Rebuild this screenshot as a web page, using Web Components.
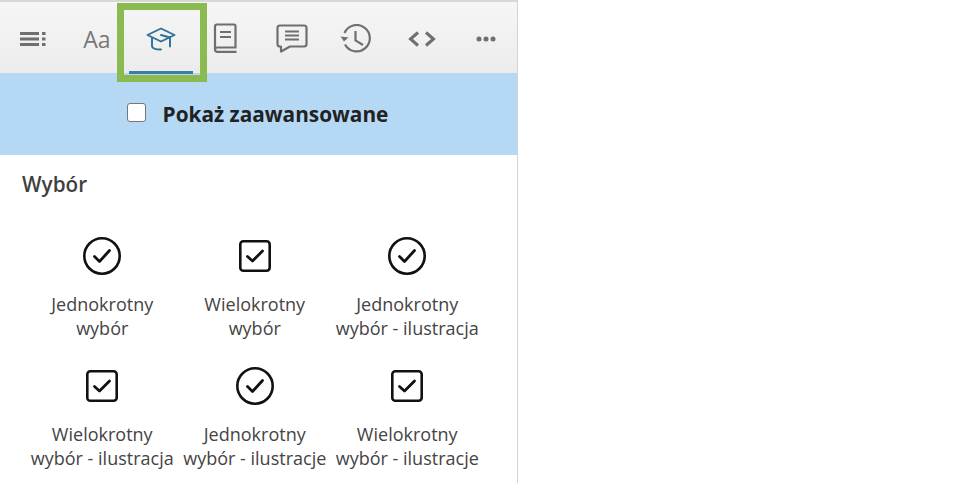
<!DOCTYPE html>
<html lang="pl">
<head>
<meta charset="utf-8">
<title>Panel</title>
<style>
  html, body { margin: 0; background: #fff; overflow: hidden; }
  body { font-family: "Open Sans", "Noto Sans", sans-serif; color: #3f3f3f; }
</style>
</head>
<body>
<side-panel>
  <tool-bar>
    <tool-tab><svg viewBox="0 0 26 14" width="26" height="14" fill="none" stroke="#6f6f6f" stroke-width="2.800"><path d="M0 1.500h19M0 7h19M0 12.500h19M22 1.500h3.500M22 7h3.500M22 12.500h3.500"/></svg></tool-tab>
    <tool-tab><span class="aa">Aa</span></tool-tab>
    <tool-tab active><svg viewBox="0 0 30 24" width="30" height="24" fill="none" stroke="#2c7196" stroke-width="1.900" stroke-linejoin="round" stroke-linecap="round"><path d="M15 1.500 28.500 8 15 14.500 1.500 8Z"/><path d="M6 11v8c0 2 3.500 3.500 9 3.500"/><path d="M15 8l9 2.500v9"/></svg></tool-tab>
    <tool-tab><svg viewBox="0 0 24 31" width="24" height="31" fill="none" stroke="#6f6f6f" stroke-width="2.200"><path d="M2 26V3.500C2 2.500 2.700 1.500 4 1.500H21.500C22.300 1.500 22.500 2 22.500 3V24.500H4.500C3 24.500 2 25.200 2 26.500 2 28 3 28.800 4.500 28.800H23.500"/><path d="M7 9h11M7 14h11"/></svg></tool-tab>
    <tool-tab><svg viewBox="0 0 32 30" width="32" height="30" fill="none" stroke="#6f6f6f" stroke-width="2.200" stroke-linejoin="round"><path d="M4 1.500H28Q30.500 1.500 30.500 4V20Q30.500 22.500 28 22.500H14L5 27.500V22.500H4Q1.500 22.500 1.500 20V4Q1.500 1.500 4 1.500Z"/><path d="M9 7.500h14M9 11.500h14M9 15.500h14"/></svg></tool-tab>
    <tool-tab><svg viewBox="0 0 32 30" width="32" height="30" fill="none" stroke="#6f6f6f" stroke-width="2.200"><path d="M4.500 9A13.200 13.200 0 1 1 5 20.500"/><path d="M0.500 12.500 4 17.500 8.500 13.500Z" fill="#6f6f6f" stroke="none"/><path d="M15.500 7V16.500L23 21"/></svg></tool-tab>
    <tool-tab><svg viewBox="0 0 28 16" width="28" height="16" fill="none" stroke="#6f6f6f" stroke-width="3"><path d="M10 1.500 2.500 8 10 14.500M18 1.500 25.500 8 18 14.500"/></svg></tool-tab>
    <tool-tab><svg viewBox="0 0 20 6" width="20" height="6" fill="#6f6f6f"><circle cx="3" cy="3" r="2.500"/><circle cx="10" cy="3" r="2.500"/><circle cx="17" cy="3" r="2.500"/></svg></tool-tab>
  </tool-bar>
  <advanced-bar>Pokaż zaawansowane</advanced-bar>
  <type-section heading="Wybór">
    <type-item kind="radio">Jednokrotny<br>wybór</type-item>
    <type-item kind="box">Wielokrotny<br>wybór</type-item>
    <type-item kind="radio">Jednokrotny<br>wybór - ilustracja</type-item>
    <type-item kind="box">Wielokrotny<br>wybór - ilustracja</type-item>
    <type-item kind="radio">Jednokrotny<br>wybór - ilustracje</type-item>
    <type-item kind="box">Wielokrotny<br>wybór - ilustracje</type-item>
  </type-section>
</side-panel>

<script>
class SidePanel extends HTMLElement {
  constructor() {
    super();
    this.attachShadow({ mode: 'open' }).innerHTML = `
      <style>
        :host { display: block; width: 517px; height: 483px; box-sizing: content-box;
                border-right: 1px solid #d4d4d4; overflow: hidden; }
      </style>
      <slot></slot>`;
  }
}

class ToolBar extends HTMLElement {
  constructor() {
    super();
    this.attachShadow({ mode: 'open' }).innerHTML = `
      <style>
        :host { display: grid; grid-template-columns: 65px 64px 63px 65px 70px 58px 73px 56px;
                height: 71px; border-top: 2px solid #d8d8d8;
                background: linear-gradient(#f6f6f6, #ececec); }
      </style>
      <slot></slot>`;
  }
}

class ToolTab extends HTMLElement {
  constructor() {
    super();
    this.attachShadow({ mode: 'open' }).innerHTML = `
      <style>
        :host { display: flex; align-items: center; justify-content: center;
                position: relative; padding-top: 2px; box-sizing: border-box; }
        ::slotted(.aa) { font: 23px "Open Sans", sans-serif; color: #777; }
        .mark { display: none; position: absolute; left: 0; width: 64px; top: 69px; height: 3px; background: #3a7fa3; }
        .frame { display: none; position: absolute; left: -12px; top: 1px; width: 76px; height: 65px;
                 border: 7px solid #8aba50; }
        :host([active]) .mark, :host([active]) .frame { display: block; }
      </style>
      <slot></slot><div class="frame"></div><div class="mark"></div>`;
  }
}

class AdvancedBar extends HTMLElement {
  constructor() {
    super();
    this.attachShadow({ mode: 'open' }).innerHTML = `
      <style>
        :host { display: flex; align-items: center; justify-content: center; gap: 17px;
                height: 82px; padding: 0 2px 0 0; box-sizing: border-box; background: #b5d8f5;
                font: 700 20.800px "Open Sans", sans-serif; color: #222; }
        i { width: 17px; height: 17px; background: #fff; border: 1px solid #767676; border-radius: 3px; margin-top: -3px; }
      </style>
      <i></i><span><slot></slot></span>`;
  }
}

class TypeSection extends HTMLElement {
  constructor() {
    super();
    this.attachShadow({ mode: 'open' }).innerHTML = `
      <style>
        :host { display: block; padding: 15px 0 0 26px; background: #fff; }
        h2 { margin: 0 0 39px -4px; font: 600 20.700px/28px "Open Sans", sans-serif; color: #3f3f3f; }
        div { display: grid; grid-template-columns: repeat(3, 152.500px); row-gap: 27px; }
      </style>
      <h2></h2><div><slot></slot></div>`;
    this.shadowRoot.querySelector('h2').textContent = this.getAttribute('heading');
  }
}

const radioIcon = `<svg viewBox="0 0 38 38" width="38" height="38" fill="none" stroke="#111"><circle cx="19" cy="19" r="17.700" stroke-width="2.600"/><path d="M11.500 19.500 16.500 24.500 26.500 13.500" stroke-width="2.800" stroke-linecap="round" stroke-linejoin="round"/></svg>`;
const boxIcon = `<svg viewBox="0 0 32 32" width="32" height="32" fill="none" stroke="#111"><rect x="1.300" y="1.300" width="29.400" height="29.400" rx="3" stroke-width="2.600"/><path d="M8.500 16.500 13.500 21 23.500 11" stroke-width="2.800" stroke-linecap="round" stroke-linejoin="round"/></svg>`;

class TypeItem extends HTMLElement {
  constructor() {
    super();
    const icon = this.getAttribute('kind') === 'box' ? boxIcon : radioIcon;
    this.attachShadow({ mode: 'open' }).innerHTML = `
      <style>
        :host { display: flex; flex-direction: column; align-items: center; text-align: center;
                font: 18px/24px "Open Sans", sans-serif; color: #444; white-space: nowrap; }
        .icon { height: 38px; display: flex; align-items: center; margin-bottom: 17px; }
      </style>
      <div class="icon">${icon}</div><div><slot></slot></div>`;
  }
}

customElements.define('side-panel', SidePanel);
customElements.define('tool-bar', ToolBar);
customElements.define('tool-tab', ToolTab);
customElements.define('advanced-bar', AdvancedBar);
customElements.define('type-section', TypeSection);
customElements.define('type-item', TypeItem);
</script>
</body>
</html>
